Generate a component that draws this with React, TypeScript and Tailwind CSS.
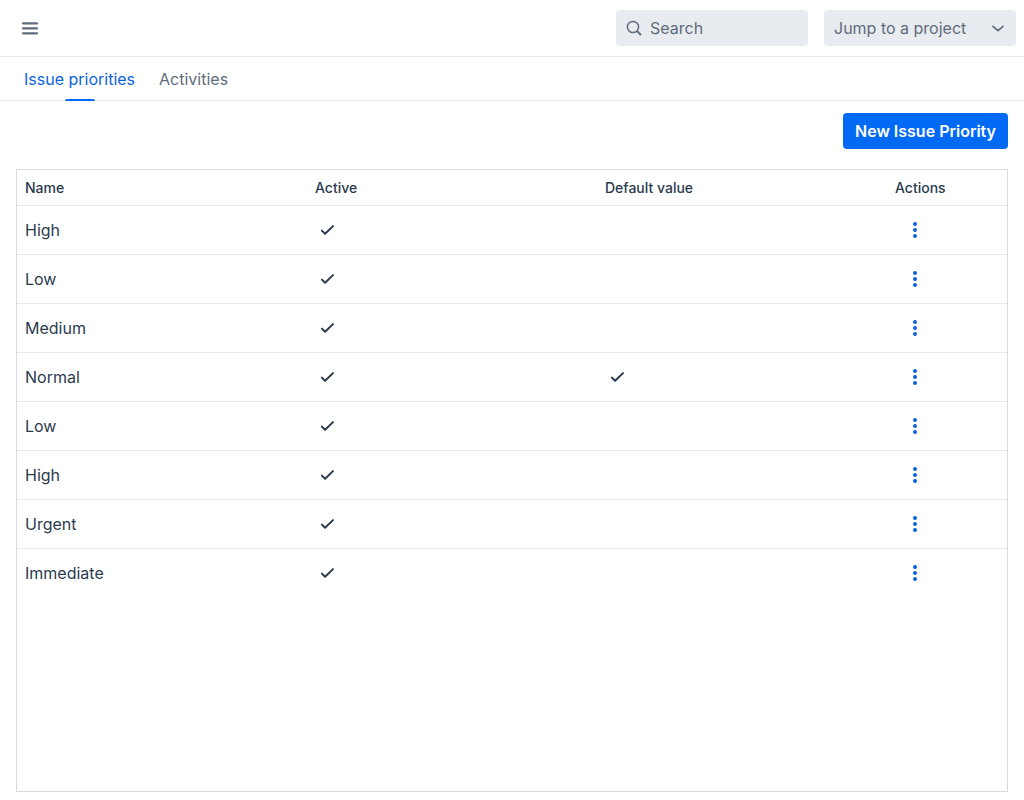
import type { ReactNode } from 'react';

type IssuePriority = {
  id: number;
  name: string;
  active: boolean;
  isDefault: boolean;
};

const priorities: IssuePriority[] = [
  { id: 1, name: 'High', active: true, isDefault: false },
  { id: 2, name: 'Low', active: true, isDefault: false },
  { id: 3, name: 'Medium', active: true, isDefault: false },
  { id: 4, name: 'Normal', active: true, isDefault: true },
  { id: 5, name: 'Low', active: true, isDefault: false },
  { id: 6, name: 'High', active: true, isDefault: false },
  { id: 7, name: 'Urgent', active: true, isDefault: false },
  { id: 8, name: 'Immediate', active: true, isDefault: false },
];

const tabs = [
  { label: 'Issue priorities', href: '#priorities', selected: true },
  { label: 'Activities', href: '#activities', selected: false },
];

function MenuIcon() {
  return (
    <svg aria-hidden width="16" height="14" viewBox="0 0 16 14" fill="currentColor">
      <rect x="0" y="1.2" width="16" height="2.2" rx="1" />
      <rect x="0" y="6.2" width="16" height="2.2" rx="1" />
      <rect x="0" y="11.2" width="16" height="2.2" rx="1" />
    </svg>
  );
}

function SearchIcon() {
  return (
    <svg
      aria-hidden
      width="16"
      height="16"
      viewBox="0 0 16 16"
      fill="none"
      stroke="currentColor"
      strokeWidth="1.5"
      className="shrink-0"
    >
      <circle cx="7" cy="7" r="5.6" />
      <path d="M11 11l4 4" strokeWidth="1.9" />
    </svg>
  );
}

function ChevronIcon() {
  return (
    <svg
      aria-hidden
      width="12"
      height="8"
      viewBox="0 0 12 8"
      fill="none"
      stroke="currentColor"
      strokeWidth="1.7"
      strokeLinecap="round"
      strokeLinejoin="round"
    >
      <path d="M1 2.4l5 4.2 5-4.2" />
    </svg>
  );
}

function CheckIcon({ label }: { label: string }) {
  return (
    <svg
      role="img"
      aria-label={label}
      width="24"
      height="24"
      viewBox="0 0 24 24"
      fill="none"
      stroke="currentColor"
      strokeWidth="2"
      strokeLinecap="round"
      strokeLinejoin="round"
    >
      <path d="M6.9 12.6l3.2 3.2 7.9-7.7" />
    </svg>
  );
}

function DotsIcon() {
  return (
    <svg aria-hidden width="16" height="16" viewBox="0 0 16 16" fill="currentColor">
      <circle cx="8" cy="2" r="2" />
      <circle cx="8" cy="8" r="2" />
      <circle cx="8" cy="14" r="2" />
    </svg>
  );
}

function HeaderCell({ children }: { children: ReactNode }) {
  return <th className="h-9 border-b border-[#e8ebef] px-2 text-left text-sm font-medium">{children}</th>;
}

function PriorityRow({ priority }: { priority: IssuePriority }) {
  return (
    <tr className="*:h-[49px] *:border-b *:border-[#e8ebef] *:px-2 *:py-0 last:*:border-transparent">
      <td>{priority.name}</td>
      <td>{priority.active && <CheckIcon label="Active" />}</td>
      <td>{priority.isDefault && <CheckIcon label="Default" />}</td>
      <td>
        <button
          type="button"
          aria-label={`Actions for ${priority.name}`}
          className="flex h-9 w-10 items-center justify-center rounded text-[#0b64dd] hover:bg-[#e8ebef]"
        >
          <DotsIcon />
        </button>
      </td>
    </tr>
  );
}

export default function App() {
  return (
    <div className="flex min-h-screen flex-col bg-white font-['Inter',sans-serif] text-base text-[#2b3b4e]">
      <header className="box-content flex h-14 items-center gap-4 border-b border-[#e8ebef] pr-2 pl-3 text-[#5f6c7d]">
        <button type="button" aria-label="Toggle menu" className="mr-auto flex h-9 w-9 items-center justify-center">
          <MenuIcon />
        </button>
        <label className="flex h-9 w-48 items-center gap-2 rounded bg-[#e8ebef] px-2.5">
          <SearchIcon />
          <input
            type="text"
            aria-label="Search"
            placeholder="Search"
            className="w-full min-w-0 bg-transparent outline-none placeholder:text-[#5f6c7d]"
          />
        </label>
        <div className="grid h-9 w-48 grid-cols-1 items-center rounded bg-[#e8ebef]">
          <select
            aria-label="Jump to a project"
            className="col-start-1 row-start-1 h-9 w-full appearance-none bg-transparent pr-8 pl-2.5 outline-none"
          >
            <option>Jump to a project</option>
          </select>
          <span className="pointer-events-none col-start-1 row-start-1 mr-3 justify-self-end">
            <ChevronIcon />
          </span>
        </div>
      </header>

      <nav className="flex h-11 gap-6 border-b border-[#e8ebef] px-6">
        {tabs.map((tab) => (
          <a
            key={tab.label}
            href={tab.href}
            aria-current={tab.selected ? 'page' : undefined}
            className={
              tab.selected
                ? 'relative flex h-11 items-center text-[#0b64dd]'
                : 'relative flex h-11 items-center text-[#5f6c7d]'
            }
          >
            {tab.label}
            {tab.selected && (
              <span className="absolute bottom-0 left-1/2 h-0.5 w-[30px] -translate-x-1/2 rounded-t bg-[#006af5]" />
            )}
          </a>
        ))}
      </nav>

      <main className="flex flex-1 flex-col gap-5 px-4 pt-3 pb-2">
        <button
          type="button"
          className="h-9 self-end rounded bg-[#006af5] px-3 font-semibold text-white hover:bg-[#005fdb]"
        >
          New Issue Priority
        </button>
        <div className="flex-1 border border-[#d8dce2]">
          <table className="w-full table-fixed border-separate border-spacing-0">
            <colgroup>
              <col />
              <col />
              <col />
              <col className="w-[120px]" />
            </colgroup>
            <thead>
              <tr>
                <HeaderCell>Name</HeaderCell>
                <HeaderCell>Active</HeaderCell>
                <HeaderCell>Default value</HeaderCell>
                <HeaderCell>Actions</HeaderCell>
              </tr>
            </thead>
            <tbody>
              {priorities.map((priority) => (
                <PriorityRow key={priority.id} priority={priority} />
              ))}
            </tbody>
          </table>
        </div>
      </main>
    </div>
  );
}
